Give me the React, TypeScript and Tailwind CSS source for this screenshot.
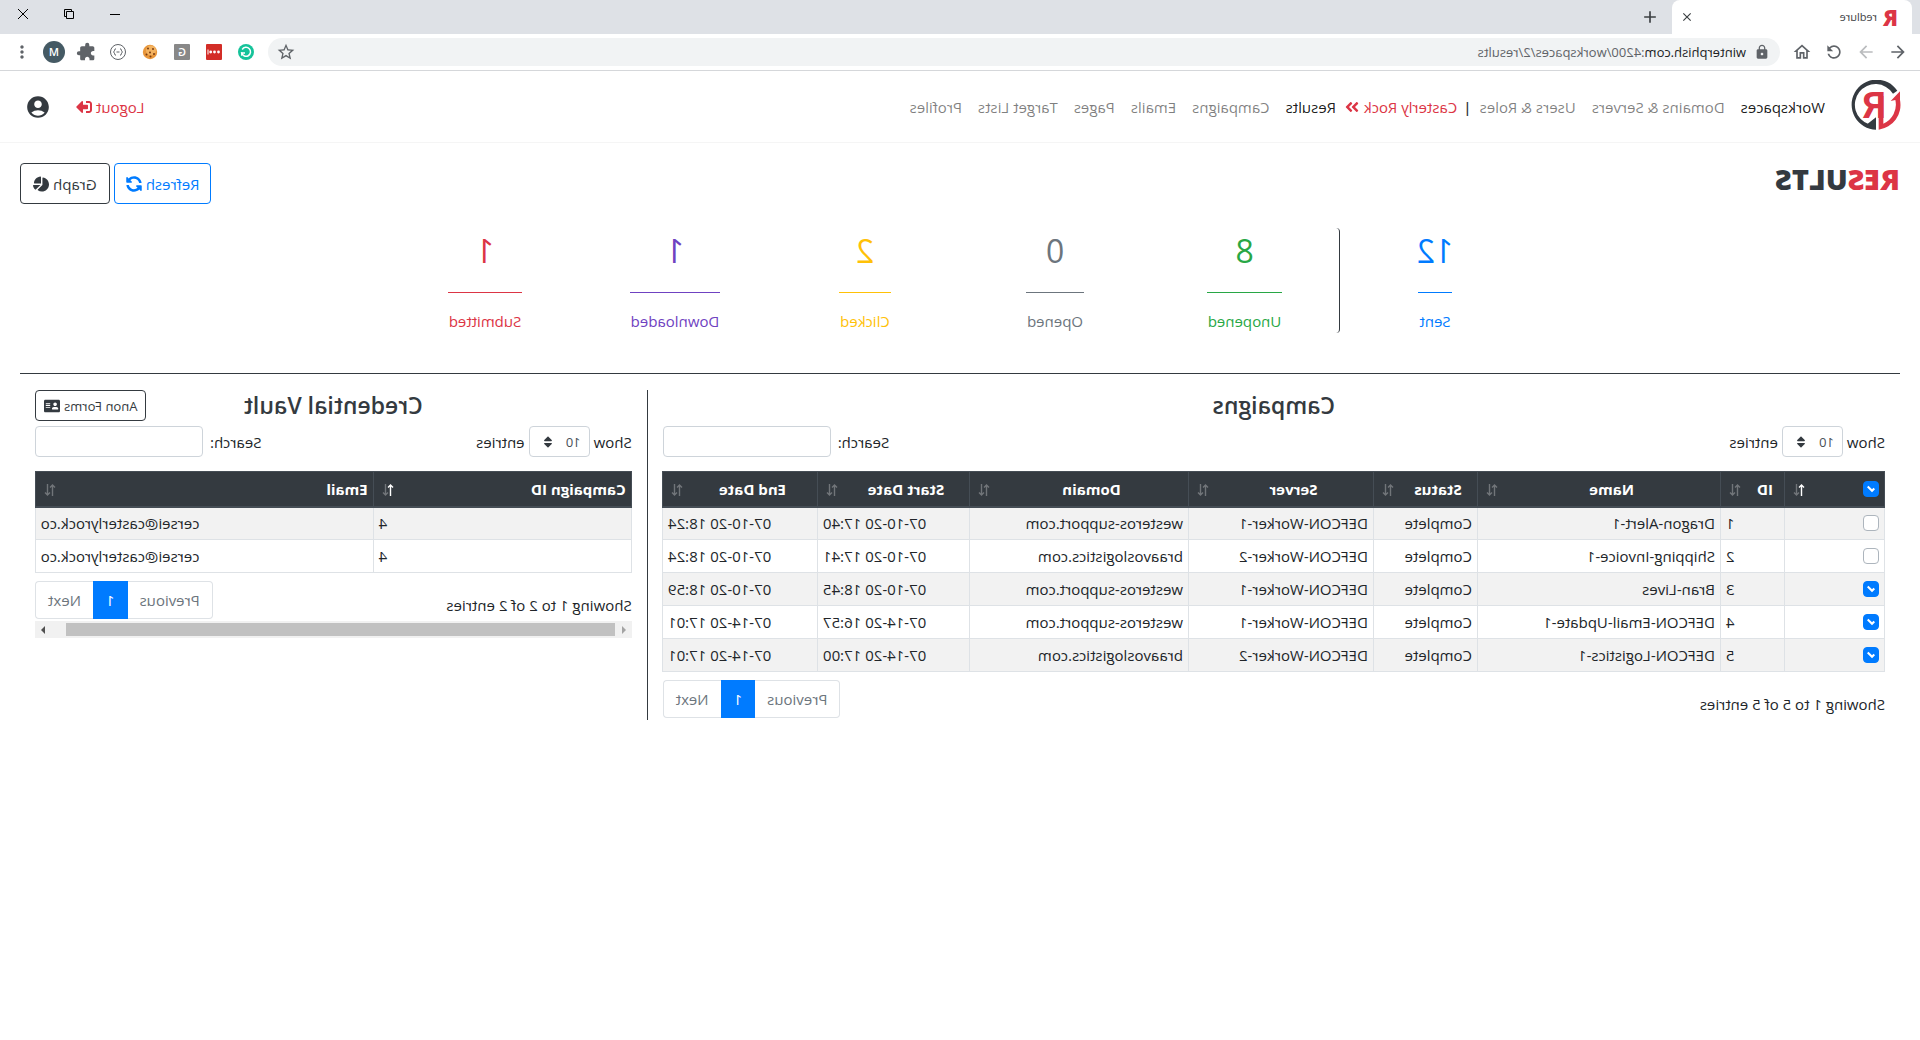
import type { ReactNode } from 'react';
import {
  FaAddressCard,
  FaAngleDoubleRight,
  FaChartPie,
  FaSignOutAlt,
  FaSort,
  FaSyncAlt,
} from 'react-icons/fa';
import {
  MdAccountCircle,
  MdAdd,
  MdArrowBack,
  MdArrowForward,
  MdClose,
  MdExtension,
  MdLock,
  MdMoreVert,
  MdOutlineHome,
  MdRefresh,
  MdStarBorder,
} from 'react-icons/md';

type Align = 'left' | 'right';

type Column = {
  label: string;
  width: number;
  align?: Align;
  sorted?: boolean;
};

const stats = [
  { value: 12, label: 'Sent', color: 'text-[#007bff]' },
  { value: 8, label: 'Unopened', color: 'text-[#28a745]' },
  { value: 0, label: 'Opened', color: 'text-[#6c757d]' },
  { value: 2, label: 'Clicked', color: 'text-[#ffc107]' },
  { value: 1, label: 'Downloaded', color: 'text-[#6f42c1]' },
  { value: 1, label: 'Submitted', color: 'text-[#dc3545]' },
];

const campaignColumns: Column[] = [
  { label: '', width: 100, sorted: true },
  { label: 'ID', width: 64, align: 'right' },
  { label: 'Name', width: 243 },
  { label: 'Status', width: 104 },
  { label: 'Server', width: 185 },
  { label: 'Domain', width: 219 },
  { label: 'Start Date', width: 152, align: 'right' },
  { label: 'End Date', width: 155, align: 'right' },
];

const campaigns = [
  { id: 1, checked: false, cells: ['Dragon-Alert-1', 'Complete', 'DEFCON-Worker-1', 'westeros-support.com', '07-10-20 17:40', '07-10-20 18:24'] },
  { id: 2, checked: false, cells: ['Shipping-Invoice-1', 'Complete', 'DEFCON-Worker-2', 'braavoslogistics.com', '07-10-20 17:41', '07-10-20 18:24'] },
  { id: 3, checked: true, cells: ['Bran-Lives', 'Complete', 'DEFCON-Worker-1', 'westeros-support.com', '07-10-20 18:45', '07-10-20 18:59'] },
  { id: 4, checked: true, cells: ['DEFCON-Email-Update-1', 'Complete', 'DEFCON-Worker-1', 'westeros-support.com', '07-14-20 16:57', '07-14-20 17:01'] },
  { id: 5, checked: true, cells: ['DEFCON-Logistics-1', 'Complete', 'DEFCON-Worker-2', 'braavoslogistics.com', '07-14-20 17:00', '07-14-20 17:01'] },
];

const credentialColumns: Column[] = [
  { label: 'Campaign ID', width: 258, align: 'right', sorted: true },
  { label: 'Email', width: 338, align: 'right' },
];

const credentials = [
  { campaign: 4, email: 'cersei@casterlyrock.co' },
  { campaign: 4, email: 'cersei@casterlyrock.co' },
];

function BrowserBar() {
  return (
    <div className="font-['Open_Sans',sans-serif] text-[#5f6368]">
      <div className="flex h-[34px] bg-[#dee1e6] pl-2">
        <div className="flex w-60 items-center rounded-t-lg bg-white pl-3.5 pr-2">
          <span className="text-[22px] font-extrabold leading-6 text-[#dc3545]" aria-hidden="true">R</span>
          <span className="ml-1.5 flex-1 text-[11px] text-[#3c4043]">redlure</span>
          <button aria-label="Close tab"><MdClose className="size-3.5 text-[#3c4043]" /></button>
        </div>
        <button aria-label="New tab" className="ml-3"><MdAdd className="size-5 text-[#3c4043]" /></button>
        <div className="ml-auto flex h-7 text-black">
          <button aria-label="Minimize" className="flex w-[46px] items-center justify-center">
            <svg viewBox="0 0 10 10" className="size-2.5" stroke="currentColor"><path d="M0 5.5h10" /></svg>
          </button>
          <button aria-label="Restore" className="flex w-[46px] items-center justify-center">
            <svg viewBox="0 0 10 10" className="size-2.5" stroke="currentColor" fill="none">
              <path d="M.5 2.5h7v7h-7zM2.5 2.5v-2h7v7h-2" />
            </svg>
          </button>
          <button aria-label="Close" className="flex w-[46px] items-center justify-center">
            <svg viewBox="0 0 10 10" className="size-2.5" stroke="currentColor"><path d="M0 0l10 10M10 0L0 10" /></svg>
          </button>
        </div>
      </div>
      <div className="flex h-[37px] items-center border-b border-[#d5d7da] bg-white pl-3 pr-3">
        <div className="flex gap-3">
          <button aria-label="Back"><MdArrowBack className="size-5" /></button>
          <button aria-label="Forward"><MdArrowForward className="size-5 text-[#babcbe]" /></button>
          <button aria-label="Reload"><MdRefresh className="size-5" /></button>
          <button aria-label="Home"><MdOutlineHome className="size-5" /></button>
        </div>
        <div className="ml-3 flex h-7 flex-1 items-center rounded-full bg-[#f1f3f4] pl-2.5 pr-2">
          <MdLock className="size-4" />
          <span className="ml-2 flex-1 text-[13px]">
            <span className="text-[#202124]">winterphish.com</span>:4200/workspaces/2/results
          </span>
          <button aria-label="Bookmark"><MdStarBorder className="size-5" /></button>
        </div>
        <div className="ml-3 flex items-center gap-3">
          <svg viewBox="0 0 20 20" className="size-5" fill="none">
            <circle cx="10" cy="10" r="8" fill="#15c39a" />
            <path d="M13.8 7.5A4.5 4.5 0 1 0 14.3 11H11" stroke="#fff" strokeWidth="1.5" />
            <path d="M14.3 10.2v3.6" stroke="#fff" strokeWidth="1.2" />
          </svg>
          <svg viewBox="0 0 20 20" className="size-5">
            <rect x="2" y="2" width="16" height="16" rx="1" fill="#d32d27" />
            <circle cx="5.5" cy="10" r="1.4" fill="#fff" />
            <circle cx="9.5" cy="10" r="1.4" fill="#fff" />
            <circle cx="13.3" cy="10" r="1.4" fill="#fff" />
            <path d="M16 7.5v5" stroke="#fff" />
          </svg>
          <svg viewBox="0 0 20 20" className="size-5">
            <rect x="2" y="2" width="16" height="16" rx="1" fill="#888" />
            <text x="10" y="14" fontSize="11" fontWeight="600" textAnchor="middle" fill="#fff" fontFamily="Open Sans">G</text>
          </svg>
          <svg viewBox="0 0 20 20" className="size-5">
            <circle cx="10" cy="10" r="7.2" fill="#e8963a" />
            <circle cx="9" cy="8.5" r="5" fill="#f3b25f" />
            <g fill="#7a3b12">
              <circle cx="7" cy="7" r="1" />
              <circle cx="12" cy="6.5" r="1" />
              <circle cx="10" cy="10.5" r="1" />
              <circle cx="6" cy="12" r="1" />
              <circle cx="13.5" cy="12.5" r="1" />
              <circle cx="9.5" cy="14.5" r="1" />
            </g>
          </svg>
          <svg viewBox="0 0 20 20" className="size-5" fill="none" stroke="#5f6368">
            <circle cx="10" cy="10" r="7.5" />
            <path d="M8 6.8q-1.4 0-1.4 1.4T5.4 10q1.2.4 1.2 1.8T8 13.2M12 6.8q1.4 0 1.4 1.4t1.2 1.8q-1.2.4-1.2 1.8T12 13.2M8.5 10h3" />
          </svg>
          <MdExtension className="size-5" />
          <span className="-mx-px flex size-[22px] items-center justify-center rounded-full bg-[#455a64] text-[11px] font-semibold text-white">M</span>
          <button aria-label="Menu"><MdMoreVert className="size-5" /></button>
        </div>
      </div>
    </div>
  );
}

function Logo() {
  return (
    <svg viewBox="0 0 150 150" className="block size-[50px]" role="img" aria-label="redlure">
      <path
        d="M11 32A75 75 0 1 1 75 149V112L101 132L96 133A62 62 0 1 0 24 41Z"
        fill="#343a40"
      />
      <path d="M3 34L31 63L17 60A62 62 0 0 0 53 131V48H67V149A75 75 0 0 1 3 60Z" fill="#dc3545" />
      <text x="45" y="115" fontSize="112" fontWeight="700" fill="#dc3545" fontFamily="Roboto">R</text>
    </svg>
  );
}

function NavLink({ children, active = false }: { children: ReactNode; active?: boolean }) {
  return (
    <a href="#" className={`px-2 ${active ? 'text-black/90' : 'text-black/50'}`}>
      {children}
    </a>
  );
}

function Navbar() {
  return (
    <nav className="flex h-[72px] items-center border-b border-[#f5f5f5] pl-[19px] pr-[25px]">
      <a href="#" className="-mt-1"><Logo /></a>
      <div className="ml-[18px] flex items-center">
        <NavLink active>Workspaces</NavLink>
        <NavLink>Domains &amp; Servers</NavLink>
        <NavLink>Users &amp; Roles</NavLink>
        <span className="font-semibold text-[#343a40]">|</span>
        <a href="#" className="ml-1.5 flex items-center gap-1 text-[#dc3545]">
          Casterly Rock <FaAngleDoubleRight className="size-4" />
        </a>
        <NavLink active>Results</NavLink>
        <NavLink>Campaigns</NavLink>
        <NavLink>Emails</NavLink>
        <NavLink>Pages</NavLink>
        <NavLink>Target Lists</NavLink>
        <NavLink>Profiles</NavLink>
      </div>
      <a href="#" className="ml-auto flex items-center gap-1 text-[#dc3545]">
        Logout <FaSignOutAlt className="size-4" />
      </a>
      <button aria-label="Account" className="ml-[25px]">
        <MdAccountCircle className="size-[26px] text-[#343a40]" />
      </button>
    </nav>
  );
}

function SortArrows({ sorted = false }: { sorted?: boolean }) {
  return (
    <svg viewBox="0 0 12 12" className="absolute bottom-2.5 right-2 size-3" fill="none" stroke="#fff" aria-hidden="true">
      <path d="M3.5 12V1M1 3.5L3.5 1L6 3.5" strokeWidth="1.4" opacity={sorted ? 1 : 0.3} />
      <path d="M8.5 0V11M6 8.5L8.5 11L11 8.5" strokeWidth="1.4" opacity="0.3" />
    </svg>
  );
}

function Checkbox({ label, checked }: { label: string; checked: boolean }) {
  return (
    <span className="relative block size-4">
      <input
        type="checkbox"
        aria-label={label}
        defaultChecked={checked}
        className="peer block size-4 appearance-none rounded border border-[#adb5bd] bg-white checked:border-[#007bff] checked:bg-[#007bff]"
      />
      <svg viewBox="0 0 8 8" className="pointer-events-none absolute left-1 top-1 hidden size-2 peer-checked:block" fill="#fff">
        <path d="M6.564.75l-3.59 3.612-1.538-1.55L0 4.26 2.974 7.25 8 2.193z" />
      </svg>
    </span>
  );
}

function DataTable({ columns, centered = false, selectable = false, rows }: {
  columns: Column[];
  centered?: boolean;
  selectable?: boolean;
  rows: ReactNode[][];
}) {
  return (
    <table className="w-full table-fixed border-collapse border border-[#dee2e6]">
      <colgroup>
        {columns.map((c) => <col key={c.label} style={{ width: c.width }} />)}
      </colgroup>
      <thead className="bg-[#343a40] text-white">
        <tr>
          {columns.map((c, i) => (
            <th
              key={c.label}
              className={`relative h-[35px] border border-b-2 border-[#454d55] pl-[5px] pr-[30px] font-bold ${centered ? 'text-center' : 'text-left'}`}
            >
              {selectable && i === 0 ? <Checkbox label="Select all campaigns" checked /> : c.label}
              <SortArrows sorted={c.sorted} />
            </th>
          ))}
        </tr>
      </thead>
      <tbody>
        {rows.map((row, r) => (
          <tr key={r} className="odd:bg-[#f2f2f2]">
            {row.map((cell, i) => (
              <td
                key={i}
                className={`h-[33px] whitespace-nowrap border border-[#dee2e6] px-[5px] ${columns[i].align === 'right' ? 'text-right' : 'text-left'}`}
              >
                {cell}
              </td>
            ))}
          </tr>
        ))}
      </tbody>
    </table>
  );
}

function TableControls({ id }: { id: string }) {
  return (
    <div className="mt-[5px] mb-3.5 flex items-center justify-between">
      <label className="flex items-center gap-1">
        Show
        <span className="relative">
          <select className="block h-[31px] w-[61px] appearance-none rounded border border-[#ced4da] bg-white pl-2 text-[13px] text-[#495057]">
            <option>10</option>
          </select>
          <FaSort className="pointer-events-none absolute right-3 top-[9px] size-3.5 text-[#343a40]" />
        </span>
        entries
      </label>
      <div className="flex items-center gap-[7px]">
        <label htmlFor={id}>Search:</label>
        <input id={id} type="search" className="h-[31px] w-[168px] rounded border border-[#ced4da] px-2 text-[13px]" />
      </div>
    </div>
  );
}

function TableFooter({ info }: { info: string }) {
  return (
    <div className="mt-2 flex items-center justify-between">
      <span className="pt-2.5">{info}</span>
      <div className="flex h-[38px] text-[#6c757d]">
        <button className="rounded-l border border-r-0 border-[#dee2e6] px-3">Previous</button>
        <button className="bg-[#007bff] px-[13px] text-white">1</button>
        <button className="rounded-r border border-l-0 border-[#dee2e6] px-3">Next</button>
      </div>
    </div>
  );
}

function Scrollbar() {
  return (
    <div className="mt-0.5 flex h-[17px] items-center bg-[#f1f1f1]">
      <svg viewBox="0 0 17 17" className="size-[17px]" fill="#a3a3a3"><path d="M10 5v8L6 9z" /></svg>
      <div className="h-[13px] flex-1 bg-[#c1c1c1]" />
      <svg viewBox="0 0 17 17" className="ml-[14px] size-[17px]" fill="#505050"><path d="M7 5v8l4-4z" /></svg>
    </div>
  );
}

export default function App() {
  return (
    <div className="min-h-screen -scale-x-100 bg-white font-['Open_Sans',sans-serif] text-[15px] leading-6 text-[#212529]">
      <BrowserBar />
      <Navbar />

      <main className="px-5 pt-5">
        <div className="flex items-start justify-between">
          <h1 className="text-[29px] font-extrabold leading-8 text-[#343a40]">
            <span className="text-[#dc3545]">RES</span>ULTS
          </h1>
          <div className="flex gap-1">
            <button className="flex h-[41px] items-center gap-1 rounded border border-[#007bff] px-[11px] text-[#007bff]">
              Refresh <FaSyncAlt className="size-4" />
            </button>
            <button className="flex h-[41px] items-center gap-1 rounded border border-[#343a40] px-3 text-[#343a40]">
              Graph <FaChartPie className="size-4" />
            </button>
          </div>
        </div>

        <section className="mx-auto mt-6 grid max-w-[1140px] grid-cols-6">
          {stats.map((s, i) => (
            <div
              key={s.label}
              className={`flex h-[105px] flex-col items-center ${s.color} ${i === 1 ? 'rounded border-l border-l-[#343a40]' : ''}`}
            >
              <span className="text-[32px] leading-[46px]">{s.value}</span>
              <span className="mt-[18px] border-t border-current px-px pt-4">{s.label}</span>
            </div>
          ))}
        </section>

        <hr className="mt-10 border-[#343a40]" />

        <div className="mt-4 flex">
          <section className="w-2/3 border-r border-[#343a40] px-[15px] pb-0.5">
            <h2 className="text-center text-[23px] font-semibold leading-[31px] text-[#343a40]">Campaigns</h2>
            <TableControls id="campaign-search" />
            <DataTable
              columns={campaignColumns}
              centered
              selectable
              rows={campaigns.map((c) => [
                <Checkbox label={`Select campaign ${c.id}`} checked={c.checked} />,
                c.id,
                ...c.cells,
              ])}
            />
            <TableFooter info="Showing 1 to 5 of 5 entries" />
          </section>

          <section className="w-1/3 px-[15px]">
            <div className="relative">
              <h2 className="text-center text-[23px] font-semibold leading-[31px] text-[#343a40]">Credential Vault</h2>
              <button className="absolute right-0 top-0 flex h-[31px] items-center gap-1 rounded border border-[#343a40] px-2 text-[13px] text-[#343a40]">
                Anon Forms <FaAddressCard className="size-4" />
              </button>
            </div>
            <TableControls id="credential-search" />
            <DataTable columns={credentialColumns} rows={credentials.map((c) => [c.campaign, c.email])} />
            <TableFooter info="Showing 1 to 2 of 2 entries" />
            <Scrollbar />
          </section>
        </div>
      </main>
    </div>
  );
}
